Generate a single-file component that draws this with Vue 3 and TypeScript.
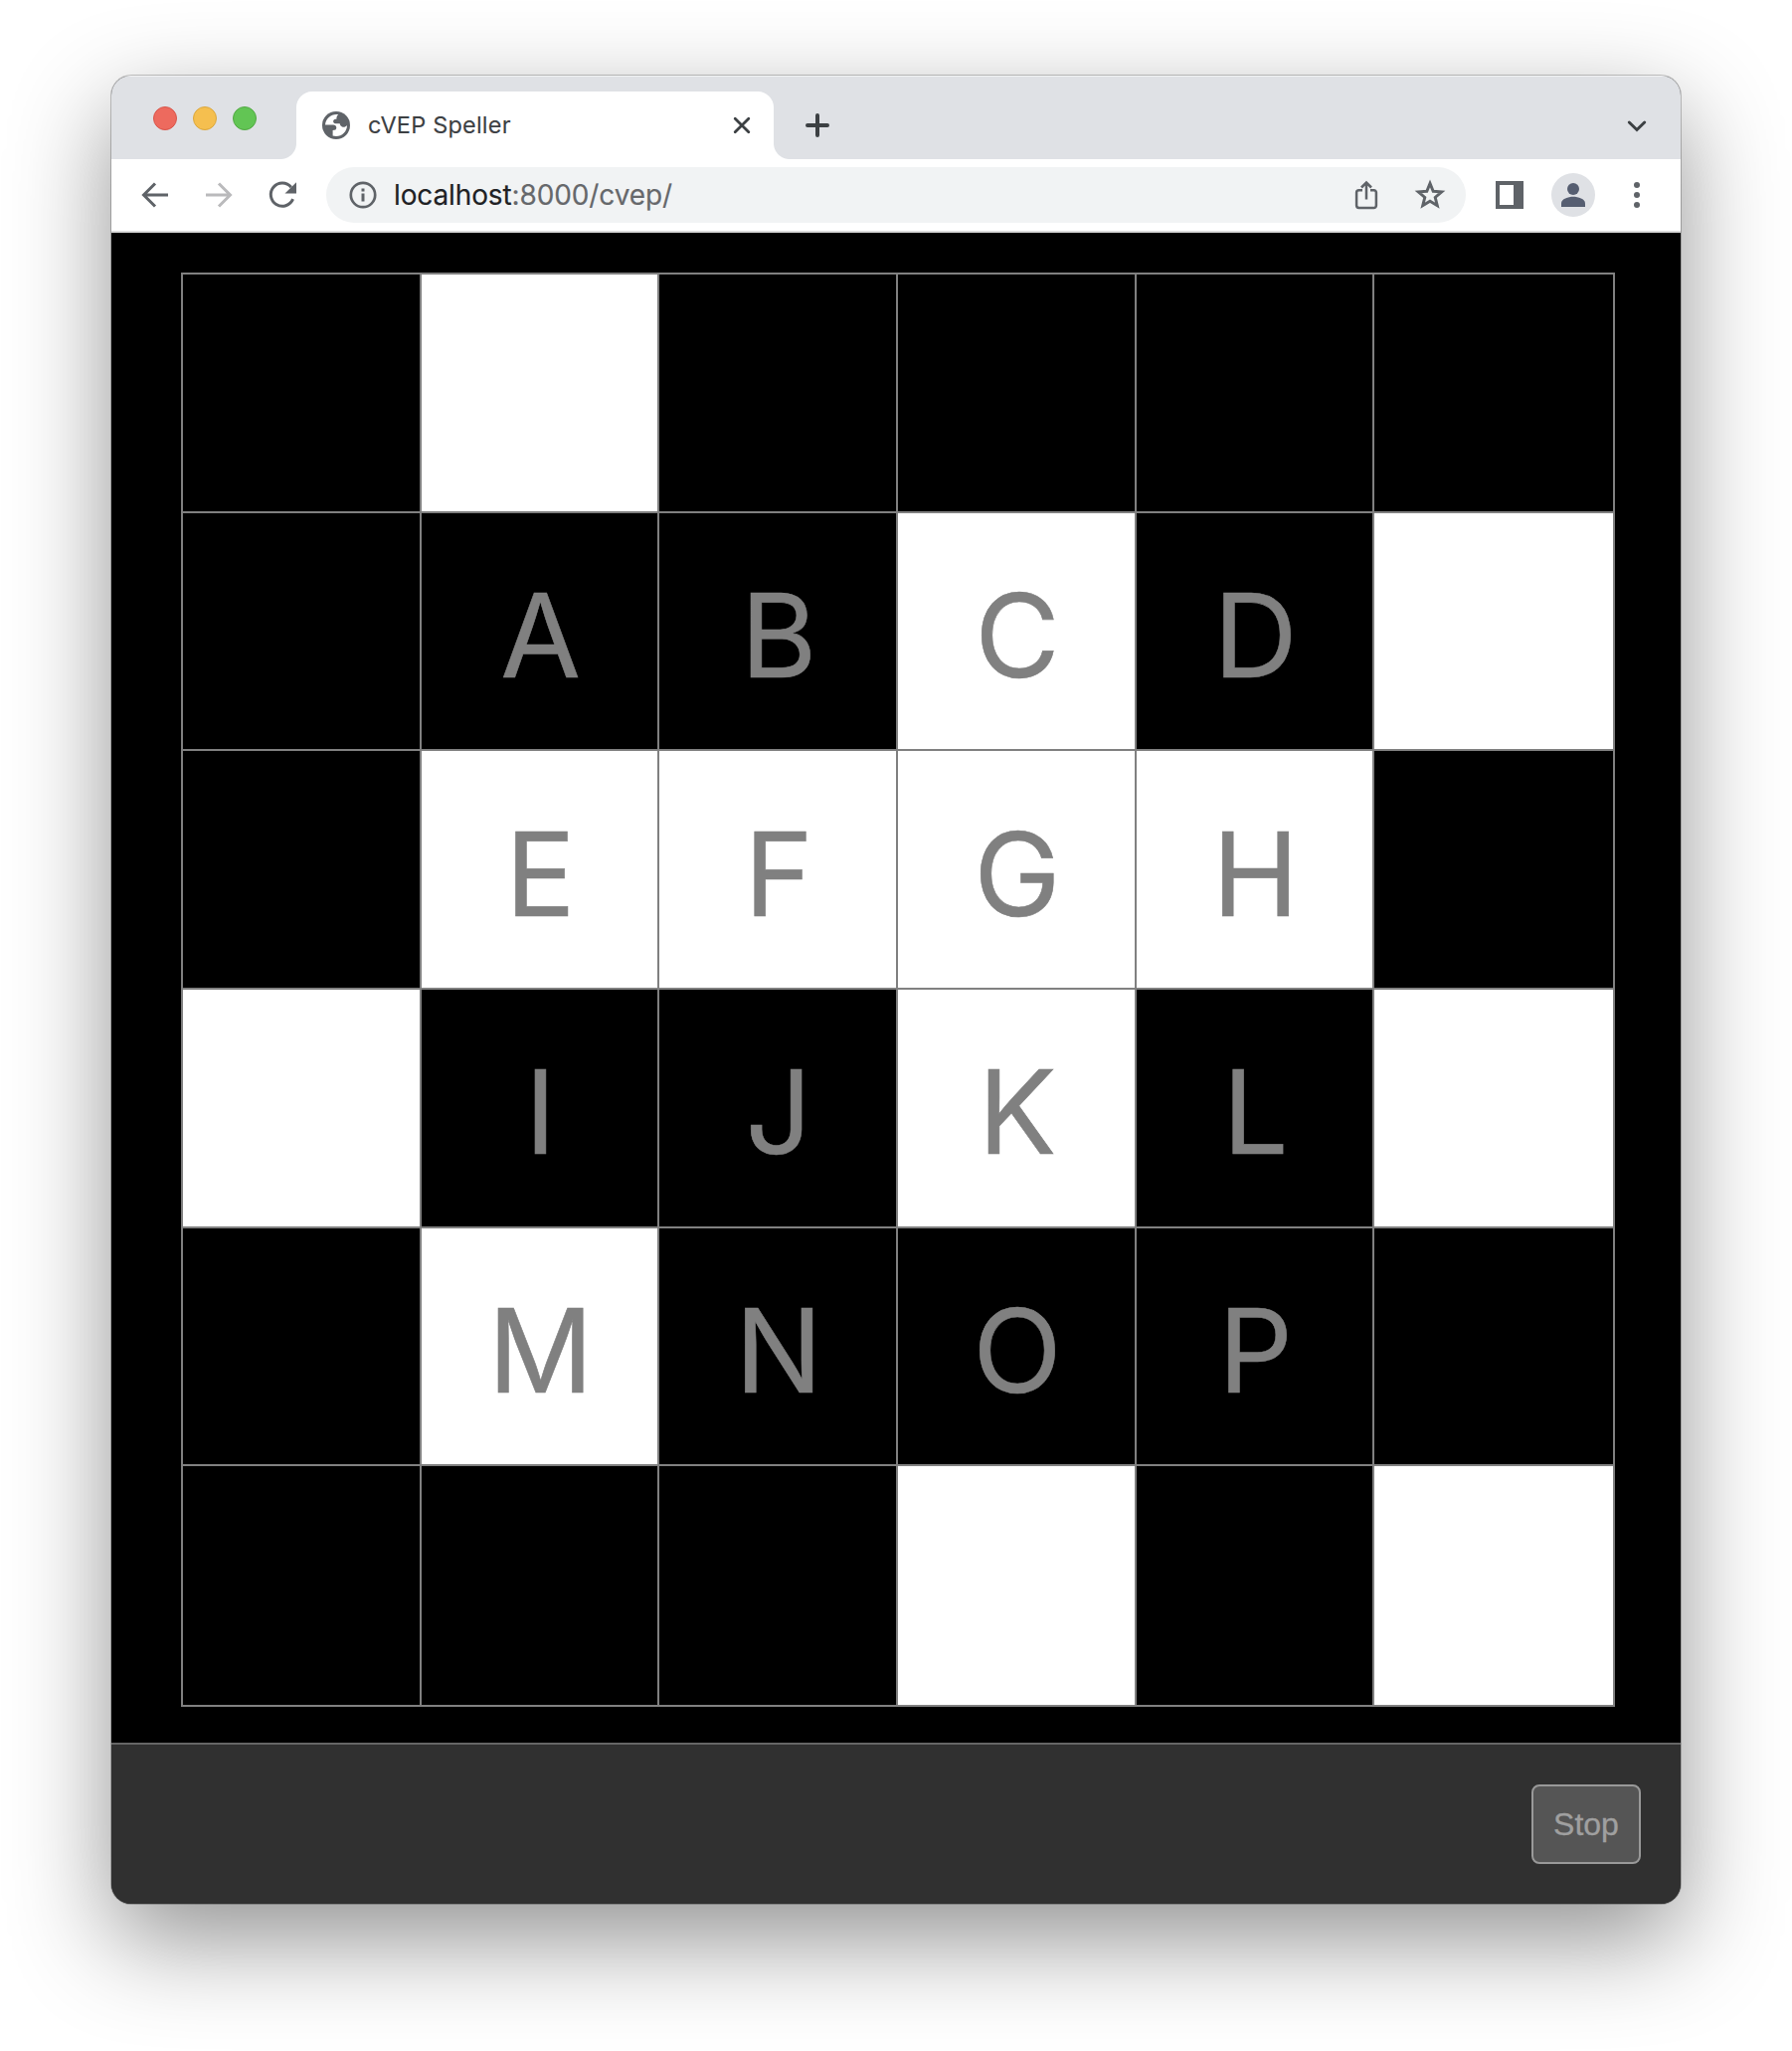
<script setup lang="ts">
interface Cell {
  label: string
  lit: boolean
}

const labels = ['      ', ' ABCD ', ' EFGH ', ' IJKL ', ' MNOP ', '      ']
const flashes = ['010000', '000101', '011110', '100101', '010000', '000101']

const cells: Cell[] = labels.flatMap((row, r) =>
  [...row].map((ch, c) => ({ label: ch.trim(), lit: flashes[r][c] === '1' })),
)
</script>

<template>
  <div class="desktop">
    <div class="window">
      <header class="tabstrip">
        <div class="lights">
          <i class="light red"></i>
          <i class="light yellow"></i>
          <i class="light green"></i>
        </div>
        <div class="tab">
          <svg class="favicon" width="28" height="28" viewBox="0 0 28 28">
            <circle cx="14" cy="14" r="14" fill="#5f6368" />
            <path
              fill="#fff"
              d="M16.300 3.200C9.500 2.200 3.600 6.800 3 13.600h8c2 0 3.300 1.100 3.300 3 0 1.700-1.100 2.500-3.700 2.500v5.500c7.600 2.200 14.400-3.400 14.400-10.600-1.300 1.700-3.300 2.200-5 1.500-1.500-.7-2-1.700-2.300-3.200h-3.400c-2 0-3.200-.9-3.200-2.300 0-1.700 1.400-2.300 3.300-2.300 0-2 .3-3.500 1.900-4.500z"
            />
          </svg>
          <span class="tab-title">cVEP Speller</span>
          <svg class="tab-close" width="20" height="20" viewBox="0 0 20 20">
            <path d="M3.200 3.200 16.800 16.800M16.800 3.200 3.200 16.800" stroke="#3c4043" stroke-width="2.800" stroke-linecap="round" />
          </svg>
        </div>
        <svg class="new-tab" width="24" height="24" viewBox="0 0 24 24">
          <path d="M12 2v20M2 12h20" stroke="#3c4043" stroke-width="4" stroke-linecap="round" />
        </svg>
        <svg class="tab-search" width="20" height="14" viewBox="0 0 20 14">
          <path d="M2.300 3 10 10.500 17.700 3" fill="none" stroke="#3c4043" stroke-width="3" stroke-linecap="round" />
        </svg>
      </header>

      <nav class="toolbar">
        <svg class="nav-icon" width="32" height="32" viewBox="0 0 32 32">
          <path d="M29 16H5M16 4.500 4.500 16 16 27.500" fill="none" stroke="#5f6368" stroke-width="3" />
        </svg>
        <svg class="nav-icon" width="32" height="32" viewBox="0 0 32 32">
          <path d="M3 16H27M16 4.500 27.500 16 16 27.500" fill="none" stroke="#bababc" stroke-width="3" />
        </svg>
        <svg class="nav-icon" width="32" height="32" viewBox="0 0 32 32">
          <path d="M26.600 20.200A11.600 11.600 0 1 1 24.800 8.200" fill="none" stroke="#5f6368" stroke-width="3" />
          <path d="M30 3.200v11.200H18.500z" fill="#5f6368" />
        </svg>
        <div class="omnibox">
          <svg class="info" width="28" height="28" viewBox="0 0 28 28">
            <circle cx="14" cy="14" r="12.200" fill="none" stroke="#5f6368" stroke-width="2.700" />
            <path d="M12.500 7.500h3v3h-3zM12.500 12.500h3v8h-3z" fill="#5f6368" />
          </svg>
          <span class="url"><b>localhost</b>:8000/cvep/</span>
          <svg class="share" width="24" height="32" viewBox="0 0 24 32" fill="none" stroke="#5f6368" stroke-width="2.500">
            <path d="M8 11.200H4.500a2.400 2.400 0 0 0-2.400 2.400v13a2.400 2.400 0 0 0 2.400 2.400h15a2.400 2.400 0 0 0 2.400-2.400v-13a2.400 2.400 0 0 0-2.400-2.400H16" />
            <path d="M12 20.500V3.500M7 8.500l5-5 5 5" />
          </svg>
          <svg class="star" width="32" height="32" viewBox="0 0 32 32">
            <path
              d="M16 4.400 19.200 12.300 27.700 12.900 21.200 18.400 23.300 26.700 16 22.200 8.700 26.700 10.800 18.400 4.300 12.900 12.800 12.300z"
              fill="none"
              stroke="#5f6368"
              stroke-width="2.900"
            />
          </svg>
        </div>
        <svg class="panel" width="28" height="28" viewBox="0 0 28 28">
          <path d="M0 0h28v28H0zM4 4v20h14V4z" fill="#5f6368" fill-rule="evenodd" />
        </svg>
        <div class="profile">
          <svg width="24" height="24" viewBox="0 0 24 24">
            <circle cx="12" cy="6" r="6" fill="#565e71" />
            <path d="M0 24v-3.500C0 16 7 13.800 12 13.800s12 2.200 12 6.700V24z" fill="#565e71" />
          </svg>
        </div>
        <svg class="menu" width="6" height="26" viewBox="0 0 6 26" fill="#5f6368">
          <circle cx="3" cy="3" r="3" />
          <circle cx="3" cy="13" r="3" />
          <circle cx="3" cy="23" r="3" />
        </svg>
      </nav>

      <main class="page">
        <div class="grid">
          <div v-for="(cell, i) in cells" :key="i" class="cell" :class="{ lit: cell.lit }">{{ cell.label }}</div>
        </div>
      </main>

      <footer class="controls">
        <button class="stop" type="button">Stop</button>
      </footer>
    </div>
  </div>
</template>

<style>
body {
  margin: 0;
  background: #fff;
}
</style>

<style scoped>
.desktop {
  box-sizing: border-box;
  width: 1802px;
  height: 2062px;
  padding: 76px 112px 0;
  overflow: hidden;
  background: #fff;
  font-family: Inter, 'Liberation Sans', sans-serif;
}

.window {
  display: flex;
  flex-direction: column;
  width: 1578px;
  height: 1838px;
  overflow: hidden;
  border-radius: 20px;
  background: #303030;
  box-shadow:
    0 0 0 1px rgba(0, 0, 0, 0.22),
    0 36px 100px rgba(0, 0, 0, 0.43);
}

.tabstrip {
  box-sizing: border-box;
  display: flex;
  height: 84px;
  padding: 0 34px 0 42px;
  border-top: 1px solid #f2f3f4;
  background: #dfe1e5;
}

.lights {
  display: flex;
  gap: 16px;
  margin: 30px 40px 0 0;
}

.light {
  box-sizing: border-box;
  width: 24px;
  height: 24px;
  border: 1px solid;
  border-radius: 50%;
}

.red {
  background: #ed6a5e;
  border-color: #d8554a;
}

.yellow {
  background: #f5bf4f;
  border-color: #dba73c;
}

.green {
  background: #62c554;
  border-color: #52a843;
}

.tab {
  position: relative;
  box-sizing: border-box;
  display: flex;
  align-items: center;
  width: 480px;
  height: 68px;
  margin-top: 15px;
  padding: 0 22px 0 26px;
  border-radius: 16px 16px 0 0;
  background: #fff;
}

.tab::before,
.tab::after {
  content: '';
  position: absolute;
  bottom: 0;
  width: 16px;
  height: 16px;
}

.tab::before {
  right: 100%;
  background: radial-gradient(circle at 0 0, transparent 15.500px, #fff 16.500px);
}

.tab::after {
  left: 100%;
  background: radial-gradient(circle at 100% 0, transparent 15.500px, #fff 16.500px);
}

.tab-title {
  flex: 1;
  margin-left: 18px;
  color: #3c4043;
  font-size: 23.500px;
  letter-spacing: 0.200px;
  line-height: 30px;
  -webkit-text-stroke: 0.100px;
}

.new-tab {
  margin: 37px 0 0 32px;
}

.tab-search {
  margin: 43px 0 0 auto;
}

.toolbar {
  box-sizing: border-box;
  display: flex;
  align-items: center;
  height: 74px;
  padding: 0 41px 0 28px;
  border-bottom: 2px solid #dadada;
  background: #fff;
}

.nav-icon {
  margin-right: 32px;
}

.omnibox {
  box-sizing: border-box;
  display: flex;
  align-items: center;
  width: 1146px;
  height: 56px;
  margin-left: -4px;
  padding: 0 20px 0 22.500px;
  border-radius: 28px;
  background: #f1f3f4;
}

.url {
  flex: 1;
  margin-left: 17.500px;
  color: #66686b;
  font-size: 28px;
  letter-spacing: -0.120px;
  line-height: 36px;
  -webkit-text-stroke: 0.150px;
}

.url b {
  color: #202124;
  font-weight: 400;
}

.star {
  margin-left: 36px;
}

.panel {
  margin-left: 30px;
}

.profile {
  display: flex;
  align-items: center;
  justify-content: center;
  width: 44px;
  height: 44px;
  margin-left: 28px;
  border-radius: 50%;
  background: #dfe1e5;
}

.menu {
  margin-left: auto;
}

.page {
  flex: 1;
  padding: 40px 0 0 70px;
  background: #000;
}

.grid {
  box-sizing: border-box;
  display: grid;
  grid-template-columns: 240px 239px 240px 240px 239px 242px;
  grid-template-rows: 240px 239px 240px 240px 239px 242px;
  width: 1442px;
  height: 1442px;
  border: solid #808080;
  border-width: 0 2px 2px 0;
}

.cell {
  box-sizing: border-box;
  padding-left: 2px;
  border: solid #808080;
  border-width: 2px 0 0 2px;
  background: #000;
  color: #808080;
  font-size: 117px;
  line-height: 245px;
  text-align: center;
  -webkit-text-stroke: 0.600px;
}

/* third row sits a pixel higher on the track, so its letters drop by one */
.cell:nth-child(n + 13):nth-child(-n + 18) {
  padding-top: 1px;
}

.lit {
  background: #fff;
}

.controls {
  box-sizing: border-box;
  display: flex;
  justify-content: flex-end;
  height: 162px;
  padding: 40px 40px 0;
  border-top: 2px solid #666;
  background: #303030;
}

.stop {
  width: 110px;
  height: 80px;
  padding: 0;
  border: 2px solid #999;
  border-radius: 8px;
  background: #555;
  color: #a0a0a0;
  font: 32px 'Liberation Sans', Arial, sans-serif;
  -webkit-text-stroke: 0.300px;
}
</style>
